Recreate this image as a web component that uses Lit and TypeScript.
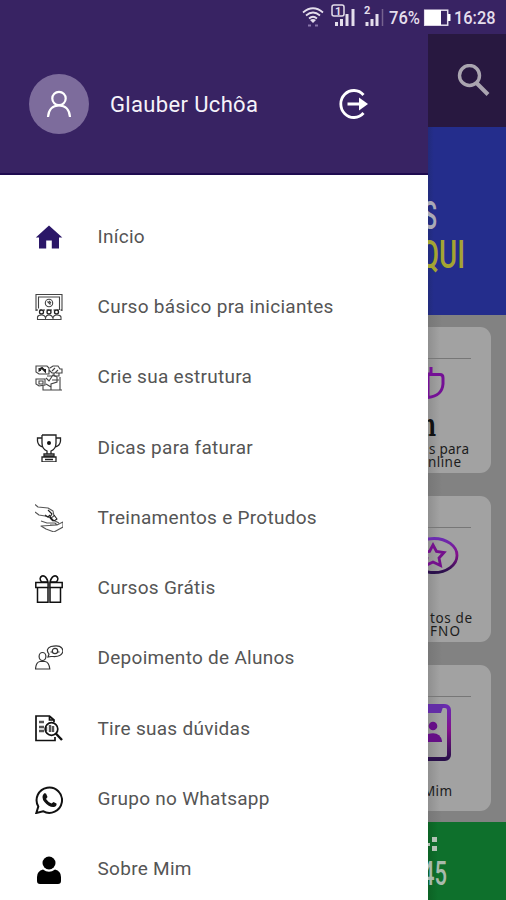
import { LitElement, html, svg, css } from "lit";
import { customElement } from "lit/decorators.js";

const icons = {
  home: svg`<path fill="#2b1768" d="M14 2.5L0.8 14.5H4V25.5H11.2V17.5H16.8V25.5H24V14.5H27.3Z"/>`,
  course: svg`<g fill="none" stroke="#444" stroke-width="1.1"><path d="M1 18V1.5H27V18M24.5 17V4H3.5V15.5M3.5 4H24.5"/><circle cx="14" cy="10" r="3.7"/><path d="M12.5 8.5L15.5 11.5M14 8L16 10"/><g stroke="#222" stroke-width="1.3"><circle cx="6.5" cy="19" r="2"/><circle cx="14" cy="19" r="2"/><circle cx="21.5" cy="19" r="2"/><path d="M1 17H27" stroke-dasharray="2 1.5" stroke-width="1"/></g><path d="M2.5 26.500V24Q3 22 6.5 22T10.5 25Q11 22 14 22T18 25Q18.500 22 22 22T26 24V26.500ZM10.500 24V26M18 24V26"/></g>`,
  structure: svg`<g fill="none" stroke="#444" stroke-width="1.1"><path d="M1 2H12L14 4V10H4L1 8ZM4 4V8M15 4L18 2H23L25 5H27V9H21M14 6L17 9H20L23 6"/><path stroke="#222" stroke-width="2" d="M5 7V5L7 4L10 7V5"/><path d="M1 15H10V21L4 22L1 20ZM4 17H8V20H4ZM11 14L14 17L18 11L22 13V18L16 20V26H25V13M8 22V26H16M11 20L16 23M25 26H27M17 16H24M12 12H17"/><path d="M17 7L20 4M19 9V12H24V9"/></g>`,
  trophy: svg`<g fill="none" stroke="#222" stroke-width="1.3"><path d="M7 1H21V9Q21 15 16 17V20M7 1V9Q7 15 12 17V20M7 4H2.500V7Q3 12 8 13M21 4H25.500V7Q25 12 20 13M9 20H19V22H9ZM7 28V23H21V28ZM10 25.500H18"/><circle cx="14" cy="9" r="2" fill="#111" stroke="none"/></g>`,
  hands: svg`<g fill="none" stroke="#555" stroke-width="1.1" stroke-linejoin="round"><path d="M0 0.500L3 3L13 4L18 7L19 12L16 14L10 12L4 11L0 8"/><path stroke="#222" d="M10 11L13 13L15 11M13 6L17 10L15 13L19 17L22 15L19 11M15 14L18 17"/><path d="M6 17L12 19L20 19L22 21H15M22 21L28 18V23L19 28L11 25L6 22ZM20 17L24 19"/></g>`,
  gift: svg`<g fill="none" stroke="#111" stroke-width="1.5"><rect x=".8" y="7.500" width="12.300" height="5"/><rect x="14.900" y="7.500" width="12.300" height="5"/><path d="M2.500 12.500V27.200H13V12.500M25.500 12.500V27.200H15V12.500"/><path d="M13 7L6.500 7Q3.500 3 7 1Q11 0 13 7M15 7L21.500 7Q24.500 3 21 1Q17 0 15 7"/></g>`,
  testimony: svg`<g fill="none" stroke="#333" stroke-width="1.200"><ellipse cx="7.500" cy="11.500" rx="3.400" ry="4"/><path d="M.5 24Q1 17 5 16.500H10Q14 17 14.800 24Z"/><path d="M13 12L14 9Q10 4 16 1.500Q27 -1 28 6Q27 12 18 11.500L16 11.500Z"/><circle cx="20" cy="6" r="2.700"/><path d="M15.500 7H17M23 7H24.500"/></g>`,
  doubts: svg`<g fill="none" stroke="#111" stroke-width="1.700"><path d="M19 7V5L14.500 1H1V25.500H20V22M14.500 1V5H19"/><path stroke="#555" stroke-width="2.400" d="M4 7H9M4 12H9M4 16H9M11 12V16M15 10V17M18 11V17"/><circle cx="16.500" cy="14" r="6.300"/><path stroke-width="2.400" d="M20.800 18.500L27 25"/></g>`,
  whatsapp: svg`<path fill="none" stroke="#111" stroke-width="2" d="M1.300 27L3.300 20.500A12.700 12.700 0 1 1 8 25.200Z"/><path fill="#111" d="M9.200 7.200L11 7.500L12.500 11L11 13Q13 16 16.500 17.500L18.500 16L21.500 17.500Q22 20 19 21Q14 21.500 9.500 16Q5.500 11 9.200 7.200Z"/>`,
  person: svg`<circle cx="14" cy="7" r="6.500" fill="#000"/><path d="M8 13.500Q14 18 20 13.500Q26 15 26 21V25Q26 28 23 28H5Q2 28 2 25V21Q2 15 8 13.500Z" fill="#000"/>`,
};

const items = [
  { icon: icons.home, label: "Início" },
  { icon: icons.course, label: "Curso básico pra iniciantes" },
  { icon: icons.structure, label: "Crie sua estrutura" },
  { icon: icons.trophy, label: "Dicas para faturar" },
  { icon: icons.hands, label: "Treinamentos e Protudos" },
  { icon: icons.gift, label: "Cursos Grátis" },
  { icon: icons.testimony, label: "Depoimento de Alunos" },
  { icon: icons.doubts, label: "Tire suas dúvidas" },
  { icon: icons.whatsapp, label: "Grupo no Whatsapp" },
  { icon: icons.person, label: "Sobre Mim" },
];

@customElement("app-root")
export class AppRoot extends LitElement {
  static styles = css`
    :host { display: flex; flex-direction: column; width: 506px; height: 900px; overflow: hidden; background: #382363; font-family: Roboto, sans-serif; }
    svg { display: block; flex: none; }
    .status { height: 34px; flex: none; display: flex; align-items: center; justify-content: flex-end; color: #e4deec; }
    .body { flex: 1; min-height: 0; display: flex; }
    .drawer { width: 428px; flex: none; background: #fff; display: flex; flex-direction: column; }
    .head { height: 141px; box-sizing: border-box; flex: none; background: #382363; border-bottom: 2px solid #1e0b50; display: flex; align-items: center; padding: 1px 59px 0 29px; }
    .avatar { width: 60px; height: 60px; border-radius: 50%; background: #7d6c9c; display: grid; place-items: center; }
    .name { flex: 1; margin-left: 21px; padding-top: 1px; font-size: 22px; font-weight: 400; line-height: 28px; color: #f6f3fa; letter-spacing: 0.35px; }
    .list { padding-top: 27px; }
    .item { height: 70.3px; display: flex; align-items: center; padding-left: 35px; gap: 34.5px; font-size: 19px; letter-spacing: 0.28px; color: #555; white-space: nowrap; }
    .item span { padding-bottom: 2px; }
    .page { width: 78px; display: flex; flex-direction: column; background: linear-gradient(90deg, #777 0, #828282 14px); overflow: hidden; }
    .search { height: 93px; background: #281840; display: flex; align-items: center; padding-left: 28px; }
    .cards { height: 507px; box-sizing: border-box; padding-top: 12px; display: flex; flex-direction: column; gap: 23px; }
    .card { width: 63px; height: 146px; border-radius: 0 11px 11px 0; background: linear-gradient(90deg, #8f8f8f 0, #a2a2a2 12px); overflow: hidden; }
    .banner { background: linear-gradient(90deg, #222b7c 0, #242d8c 6px); }
    .footer { background: linear-gradient(90deg, #0c6224 0, #0e702c 10px); height: 78px; }
    .cap { font-family: "Noto Sans", sans-serif; font-size: 13.5px; fill: #1c1c1c; }
    .narrow { font-family: Roboto, sans-serif; font-weight: 500; }
  `;

  private card(art: unknown) {
    return html`<div class="card"><svg width="63" height="146">
      <defs><linearGradient id="g" x1="0" y1="0" x2="0" y2="1"><stop offset="0" stop-color="#6a2bb0"/><stop offset=".45" stop-color="#84118c"/><stop offset="1" stop-color="#29104a"/></linearGradient></defs>
      <path d="M0 31.500H43" stroke="#777"/>${art}</svg></div>`;
  }

  render() {
    return html`
      <div class="status">
        <svg width="206" height="34" fill="none" stroke="#e4deec">
          <g stroke-width="1.700"><path d="M3 12.500Q13 4 23 12.500M6 15.500Q13 9.500 20 15.500M9 18.500Q13 15 17 18.500"/></g>
          <path fill="#e4deec" stroke="none" d="M10 20Q13 18 16 20L13 23Z"/>
          <path stroke="#8775aa" stroke-width="2" d="M8 25.500H11M15 25.500H18"/>
          <rect x="32" y="5" width="12" height="11" rx="2" stroke-width="1.500"/>
          <text x="35" y="14.500" font-size="11" font-weight="700" fill="#e4deec" stroke="none">1</text>
          <g stroke-width="3"><path d="M36.500 22V26M41.500 19V26M47 14V26M53 9V26"/></g>
          <text x="64" y="14" font-size="11" font-weight="700" fill="#e4deec" stroke="none">2</text>
          <g stroke-width="3"><path d="M67 22V26M72 19V26M77 14V26"/><path stroke="#75628f" stroke-width="1.500" d="M82.500 9V26"/></g>
          <text x="89" y="24.300" font-size="17.500" font-weight="500" textLength="31" lengthAdjust="spacingAndGlyphs" fill="#e4deec" stroke="none">76%</text>
          <rect x="124.700" y="10.200" width="23" height="15" stroke-width="1.500"/>
          <path fill="#fff" stroke="none" d="M125 10H141V25H125ZM148 14H150.500V21H148Z"/>
          <text x="154" y="24.300" font-size="18" font-weight="500" textLength="41.500" lengthAdjust="spacingAndGlyphs" fill="#e4deec" stroke="none">16:28</text>
        </svg>
      </div>
      <div class="body">
        <div class="drawer">
          <div class="head">
            <div class="avatar"><svg width="26" height="28" fill="none" stroke="#fff" stroke-width="2.200"><circle cx="13" cy="8.500" r="6.700"/><path d="M2 27Q3 15.500 13 15.500T24 27"/></svg></div>
            <div class="name">Glauber Uchôa</div>
            <svg width="32" height="32" fill="none" stroke="#fff" stroke-width="2.800"><path d="M26.500 7A13 13.500 0 1 0 26.500 25M10.500 16H27"/><path fill="#fff" stroke="none" d="M22 9.500L31 16L22 22.500Z"/></svg>
          </div>
          <div class="list">${items.map((i) => html`<div class="item"><svg width="28" height="28" viewBox="0 0 28 28">${i.icon}</svg><span>${i.label}</span></div>`)}</div>
        </div>
        <div class="page">
          <div class="search"><svg width="34" height="34" fill="none" stroke="#aaa5b0" stroke-width="3.400"><circle cx="13.500" cy="11.500" r="10"/><path stroke-width="4" d="M20.500 19L32 30.500"/></svg></div>
          <svg class="banner" width="78" height="188">
            <text class="narrow" x="-5" y="102" font-size="39" textLength="14" lengthAdjust="spacingAndGlyphs" fill="#aaaab5">S</text>
            <text class="narrow" x="-8" y="141" font-size="39" textLength="45" lengthAdjust="spacingAndGlyphs" fill="#a4a432">QUI</text>
          </svg>
          <div class="cards">
            ${this.card(svg`<path fill="none" stroke="#741095" stroke-width="3" d="M-4 47H3V40M0 47.500H12Q15 47.500 15 51V57Q14 69 0 70.500V47"/><text x="-7" y="109" font-family="DejaVu Serif" font-weight="700" font-size="32" textLength="15" lengthAdjust="spacingAndGlyphs" fill="#111">n</text><text class="cap" x="1" y="127" textLength="40">s para</text><text class="cap" x="0" y="139.500" textLength="33">nline</text>`)}
            ${this.card(svg`<ellipse cx="6" cy="59.500" rx="23" ry="17" fill="none" stroke="url(#g)" stroke-width="2.800"/><path fill="none" stroke="#74108c" stroke-width="2.800" d="M5 49L8.500 55.500L16 56.500L11 62L12.500 69.500L5 66L-2.500 69.500L-1 62L-6 56.500L1.500 55.500Z"/><text class="cap" x="2" y="127" textLength="42">tos de</text><text class="cap" x="2" y="139.500" textLength="30">FNO</text>`)}
            ${this.card(svg`<rect x="-23" y="41" width="44" height="53" rx="4" fill="none" stroke="url(#g)" stroke-width="4"/><path d="M0 39H16L13 48H0Z" fill="#632da6"/><circle cx="5" cy="61" r="4.300" fill="#650f86"/><path d="M0 69Q12 66 14 76V77H0Z" fill="#650f86"/><text class="cap" x="-5" y="131" textLength="29">Mim</text>`)}
          </div>
          <svg class="footer" width="78" height="78">
            <path fill="#b3c2b5" d="M4 15H9V20H4ZM4 24H9V29H4ZM0 21H2V24H0Z"/>
            <text class="narrow" x="-6" y="63" font-size="33" textLength="25" lengthAdjust="spacingAndGlyphs" fill="#a8baac">45</text>
          </svg>
        </div>
      </div>`;
  }
}
